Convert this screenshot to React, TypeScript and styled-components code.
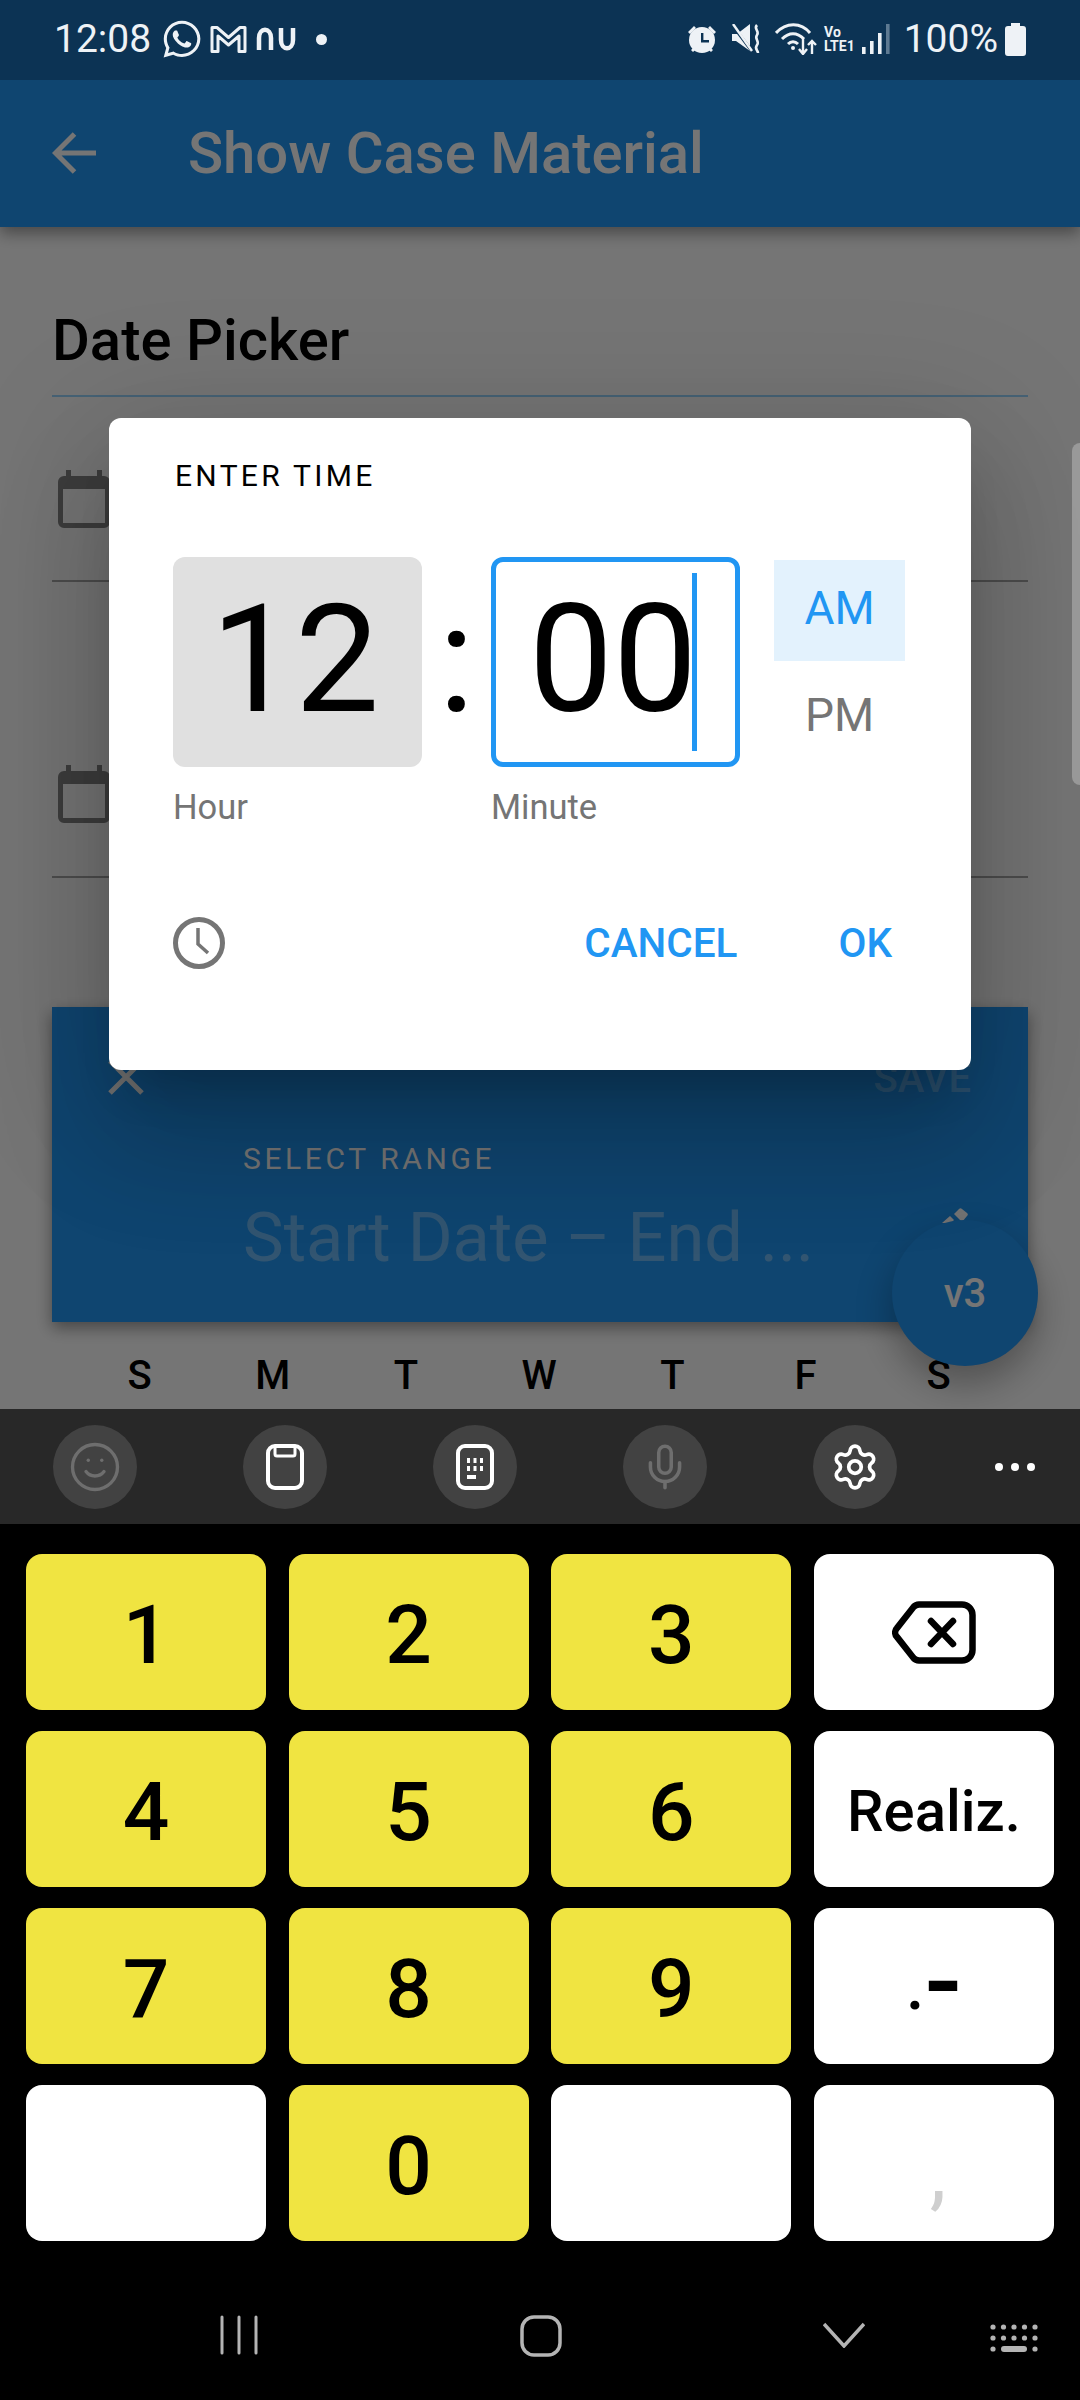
import React from 'react';
import styled, { createGlobalStyle } from 'styled-components';
import { Mic, Settings, Smile } from 'lucide-react';
import { FaWhatsapp } from 'react-icons/fa';

const GlobalStyle = createGlobalStyle`
  html, body {
    margin: 0;
    padding: 0;
    background: #000;
  }
  * {
    box-sizing: border-box;
  }
`;

const Root = styled.div`
  width: 1080px;
  height: 2400px;
  display: flex;
  flex-direction: column;
  overflow: hidden;
  font-family: Roboto, "Liberation Sans", sans-serif;
`;

const StatusBar = styled.div`
  height: 80px;
  flex-shrink: 0;
  display: flex;
  align-items: center;
  justify-content: space-between;
  padding: 0 54px 2px 54px;
  background: #0c3354;
  color: #eef2f6;
`;

const StatusGroup = styled.div`
  display: flex;
  align-items: center;
`;

const StatusText = styled.span<{ $ml?: number }>`
  font-size: 39px;
  line-height: 48px;
  margin-left: ${p => p.$ml || 0}px;
`;

const StatusIcon = styled.svg<{ $ml?: number }>`
  display: block;
  margin-left: ${p => p.$ml || 0}px;
  flex-shrink: 0;
`;

const NetStack = styled.div`
  display: flex;
  flex-direction: column;
  margin-left: 7px;
  font-size: 14px;
  font-weight: 700;
  line-height: 14px;
`;

const Screen = styled.div`
  position: relative;
  height: 1329px;
  flex-shrink: 0;
  overflow: hidden;
  background: #fff;
`;

const AppBar = styled.div`
  height: 147px;
  display: flex;
  align-items: center;
  padding: 0 0 2px 52px;
  background: #2196f3;
  color: #fff;
  box-shadow: 0 6px 15px rgba(0, 0, 0, 0.4);
`;

const AppTitle = styled.div`
  margin-left: 92px;
  font-size: 58px;
  font-weight: 500;
`;

const Content = styled.div`
  padding: 0 52px;
`;

const SectionTitle = styled.div`
  margin-top: 81px;
  height: 64px;
  font-size: 58px;
  line-height: 64px;
  font-weight: 500;
  color: #000;
`;

const SectionRule = styled.div`
  height: 2px;
  margin-top: 23px;
  background: #9ad5ff;
`;

const DateRow = styled.div<{ $height: number; $iconTop: number }>`
  height: ${p => p.$height}px;
  padding: ${p => p.$iconTop}px 0 0 6px;
  border-bottom: 2px solid #a8a8a8;
`;

const RangeHeader = styled.div`
  height: 315px;
  margin-top: 129px;
  background: #2196f3;
  color: #fff;
  box-shadow: 0 6px 15px rgba(0, 0, 0, 0.4);
  display: flex;
  flex-direction: column;
  padding: 137px 0 0 191px;
`;

const RangeLabel = styled.div`
  font-size: 30px;
  line-height: 30px;
  letter-spacing: 3.6px;
`;

const RangeValue = styled.div`
  margin-top: 19px;
  font-size: 68.5px;
  line-height: 90px;
  color: rgba(255, 255, 255, 0.35);
  white-space: nowrap;
`;

const WeekRow = styled.div`
  display: grid;
  grid-template-columns: repeat(7, 133.2px);
  margin: 30px 0 0 21px;
`;

const WeekDay = styled.div`
  text-align: center;
  font-size: 40px;
  line-height: 47px;
  font-weight: 500;
  color: #000;
`;

const RangeTools = styled.div`
  position: absolute;
  left: 53px;
  top: 927px;
  width: 974px;
  height: 100px;
  color: #fff;
`;

const RangeSave = styled.div`
  position: absolute;
  right: 56px;
  top: 48px;
  font-size: 40px;
  font-weight: 500;
  line-height: 47px;
  color: rgba(255, 255, 255, 0.3);
`;

const RangeClose = styled.svg`
  position: absolute;
  left: 55px;
  top: 52px;
`;

const ScrollThumb = styled.div`
  position: absolute;
  right: -8px;
  top: 363px;
  width: 16px;
  height: 342px;
  border-radius: 8px;
  background: #9b9b9b;
`;

const Fab = styled.div`
  position: absolute;
  left: 892px;
  top: 1140px;
  width: 146px;
  height: 146px;
  border-radius: 50%;
  display: flex;
  align-items: center;
  justify-content: center;
  background: #2196f3;
  color: #fff;
  font-size: 40px;
  font-weight: 500;
  box-shadow: 0 18px 36px rgba(0, 0, 0, 0.3);
`;

const FabPeek = styled.svg`
  position: absolute;
  left: 942px;
  top: 1128px;
`;

const Scrim = styled.div`
  position: absolute;
  inset: 0;
  background: rgba(0, 0, 0, 0.54);
`;

const Dialog = styled.div`
  position: absolute;
  left: 109px;
  top: 338px;
  width: 862px;
  height: 652px;
  display: flex;
  flex-direction: column;
  padding: 0 64px;
  border-radius: 12px;
  background: #fff;
  box-shadow: 0 72px 114px 9px rgba(0, 0, 0, 0.14), 0 27px 138px 24px rgba(0, 0, 0, 0.12),
    0 33px 45px -21px rgba(0, 0, 0, 0.2);
`;

const DialogTitle = styled.div`
  margin: 40px 0 0 2px;
  height: 36px;
  font-size: 30px;
  line-height: 36px;
  letter-spacing: 3.3px;
  color: #000;
`;

const TimeRow = styled.div`
  display: flex;
  margin-top: 63px;
`;

const TimeColumn = styled.div`
  width: 249px;
  display: flex;
  flex-direction: column;
`;

const TimeField = styled.div<{ $focused?: boolean }>`
  position: relative;
  height: 210px;
  display: flex;
  align-items: center;
  justify-content: center;
  padding: 0 5px 5px 0;
  border-radius: 12px;
  border: ${p => (p.$focused ? '5px solid #2196f3' : 'none')};
  background: ${p => (p.$focused ? '#fff' : '#e0e0e0')};
  font-size: 150px;
  line-height: 176px;
  color: #000;
`;

const Caret = styled.div`
  position: absolute;
  left: 196px;
  top: 11px;
  width: 5px;
  height: 178px;
  background: #2196f3;
`;

const FieldLabel = styled.div`
  margin: 19px 0 0 0;
  font-size: 34.5px;
  line-height: 42px;
  color: #757575;
`;

const Colon = styled.div`
  width: 69px;
  height: 210px;
  display: flex;
  align-items: center;
  justify-content: center;
  padding-bottom: 5px;
  font-size: 150px;
  line-height: 176px;
  color: #000;
`;

const PeriodColumn = styled.div`
  width: 131px;
  margin: 3px 0 0 34px;
  display: flex;
  flex-direction: column;
`;

const PeriodOption = styled.div<{ $active?: boolean }>`
  height: 101px;
  display: flex;
  align-items: center;
  justify-content: center;
  margin-bottom: 6px;
  padding-bottom: 5px;
  font-size: 46px;
  color: ${p => (p.$active ? '#2196f3' : '#757575')};
  background: ${p => (p.$active ? '#e3f2fd' : 'transparent')};
`;

const ActionRow = styled.div`
  display: flex;
  align-items: center;
  margin-top: 87px;
  height: 56px;
`;

const ActionSpacer = styled.div`
  flex: 1;
`;

const ActionButton = styled.div<{ $ml: number }>`
  margin: 0 15px 0 ${p => p.$ml}px;
  font-size: 40.5px;
  font-weight: 500;
  color: #2196f3;
`;

const Toolbar = styled.div`
  height: 115px;
  flex-shrink: 0;
  position: relative;
  display: flex;
  align-items: center;
  gap: 106px;
  padding-left: 53px;
  background: #282828;
`;

const ToolButton = styled.div<{ $dim?: boolean }>`
  width: 84px;
  height: 84px;
  display: flex;
  align-items: center;
  justify-content: center;
  border-radius: 50%;
  background: #424242;
  color: ${p => (p.$dim ? '#6e6e6e' : '#fff')};
`;

const MoreDots = styled.div`
  display: flex;
  gap: 8px;
  margin-left: -8px;
`;

const MoreDot = styled.span`
  width: 8px;
  height: 8px;
  border-radius: 50%;
  background: #fff;
`;

const Keyboard = styled.div`
  height: 876px;
  flex-shrink: 0;
  display: flex;
  flex-direction: column;
  background: #000;
  padding: 30px 26px 0;
`;

const KeyGrid = styled.div`
  display: grid;
  grid-template-columns: repeat(4, 240px);
  grid-auto-rows: 156px;
  column-gap: 22.67px;
  row-gap: 21px;
`;

const Key = styled.div<{ $digit?: boolean }>`
  display: flex;
  align-items: center;
  justify-content: center;
  border-radius: 16px;
  background: ${p => (p.$digit ? '#f0e441' : '#fff')};
  color: #000;
  font-size: 82px;
  font-weight: 500;
  padding-top: ${p => (p.$digit ? 6 : 0)}px;
`;

const KeyWord = styled.span`
  font-size: 58px;
  margin-top: 4px;
`;

const KeyDash = styled.span`
  display: flex;
  align-items: baseline;
  margin-top: 6px;
  font-size: 110px;
  line-height: 110px;
`;

const KeyDot = styled.span`
  font-size: 66px;
  transform: translateY(-10px);
`;

const KeyComma = styled.span`
  margin: 18px 0 0 8px;
  font-size: 84px;
  line-height: 84px;
  font-weight: 400;
  color: #cfcfcf;
`;

const NavBar = styled.div`
  position: relative;
  height: 40px;
  margin-top: 74px;
  display: flex;
  align-items: center;
`;

const NavIcon = styled.svg<{ $left: number; $top?: number }>`
  position: absolute;
  left: ${p => p.$left}px;
  top: ${p => p.$top || 0}px;
`;

const CalendarIcon = () => (
  <svg width="52" height="58" viewBox="0 0 52 58" fill="#858585">
    <path d="M8 0h5v8H8zM39 0h5v8h-5z" />
    <path
      fillRule="evenodd"
      d="M6 6h40a6 6 0 0 1 6 6v40a6 6 0 0 1-6 6H6a6 6 0 0 1-6-6V12a6 6 0 0 1 6-6zM5 19v34h42V19z"
    />
  </svg>
);

const Digit = ({ value }: { value: string }) => <Key $digit>{value}</Key>;

const App = () => (
  <Root>
    <GlobalStyle />
    <StatusBar>
      <StatusGroup>
        <StatusText>12:08</StatusText>
        <FaWhatsapp size={42} style={{ marginLeft: 10 }} />
        <StatusIcon $ml={7} width="37" height="30" viewBox="0 0 37 30" fill="none" stroke="currentColor" strokeWidth="3" strokeLinejoin="round">
          <path d="M2 3.5h5l11.5 10L30 3.5h5v24h-6V12L18.5 21 8 12v15.5H2z" />
        </StatusIcon>
        <StatusIcon $ml={9} width="40" height="24" viewBox="0 0 40 24" fill="none" stroke="currentColor" strokeWidth="4.5">
          <path d="M3 23V11c0-11 12-11 12 0v12M25 1v12c0 11 12 11 12 0V1" />
        </StatusIcon>
        <StatusIcon $ml={20} width="11" height="11" viewBox="0 0 11 11" fill="currentColor">
          <circle cx="5.5" cy="5.5" r="5.5" />
        </StatusIcon>
      </StatusGroup>
      <StatusGroup>
        <StatusIcon width="30" height="30" viewBox="0 0 30 30" fill="currentColor">
          <circle cx="15" cy="16" r="13" />
          <path d="M1 8l6-6 2 2-6 6zM29 8l-6-6-2 2 6 6zM4 26l3-3 2 2-3 3zM26 26l-3-3-2 2 3 3z" />
          <path d="M14 9h2.4v7H22v2.4h-8z" fill="#0c3354" />
        </StatusIcon>
        <StatusIcon $ml={15} width="30" height="30" viewBox="0 0 30 30" fill="currentColor">
          <path d="M0 10h5L18 0v27L4 17H0z" />
          <path d="M1 2l18 24" stroke="#0c3354" strokeWidth="3" />
          <path d="M1 0l19 27" stroke="currentColor" strokeWidth="2.5" />
          <path d="M25 1c-4 4 3 6 0 10s3 6 0 10 1 5 1 8" fill="none" stroke="currentColor" strokeWidth="2.6" />
        </StatusIcon>
        <StatusIcon $ml={13} width="42" height="32" viewBox="0 0 42 32" fill="none" stroke="currentColor" strokeWidth="3">
          <path d="M1 10c10-11 25-11 34 0M7 16c7-7 15-7 22 0M13 21c3-3 7-3 10 0" />
          <circle cx="18" cy="25" r="2" fill="currentColor" stroke="none" />
          <path d="M28 15v15M24 26l4 5 4-5M37 31V18M33 22l4-4 4 4" strokeWidth="2.4" />
        </StatusIcon>
        <NetStack>
          <span>Vo</span>
          <span>LTE1</span>
        </NetStack>
        <StatusIcon $ml={7} width="28" height="30" viewBox="0 0 28 30" fill="currentColor">
          <rect x="0" y="23" width="3.6" height="7" />
          <rect x="8" y="17" width="3.6" height="13" />
          <rect x="16" y="9" width="3.6" height="21" />
          <rect x="24" y="0" width="3.6" height="30" fill="#5e7a92" />
        </StatusIcon>
        <StatusText $ml={14}>100%</StatusText>
        <StatusIcon $ml={7} width="21" height="33" viewBox="0 0 21 33" fill="currentColor">
          <path d="M6 0h9v3h3a3 3 0 0 1 3 3v24a3 3 0 0 1-3 3H3a3 3 0 0 1-3-3V6a3 3 0 0 1 3-3h3z" />
        </StatusIcon>
      </StatusGroup>
    </StatusBar>

    <Screen>
      <AppBar>
        <svg width="44" height="42" viewBox="0 0 44 42" fill="none" stroke="currentColor" strokeWidth="5">
          <path d="M44 21H5M22.5 2L3.5 21l19 19" />
        </svg>
        <AppTitle>Show Case Material</AppTitle>
      </AppBar>
      <Content>
        <SectionTitle>Date Picker</SectionTitle>
        <SectionRule />
        <DateRow $height={185} $iconTop={73}>
          <CalendarIcon />
        </DateRow>
        <DateRow $height={296} $iconTop={183}>
          <CalendarIcon />
        </DateRow>
        <RangeHeader>
          <RangeLabel>SELECT RANGE</RangeLabel>
          <RangeValue>Start Date – End ...</RangeValue>
        </RangeHeader>
        <WeekRow>
          {['S', 'M', 'T', 'W', 'T', 'F', 'S'].map((d, i) => (
            <WeekDay key={i}>{d}</WeekDay>
          ))}
        </WeekRow>
      </Content>
      <RangeTools>
        <RangeClose width="36" height="36" viewBox="0 0 36 36" fill="none" stroke="#fff" strokeWidth="5">
          <path d="M2 2l32 32M34 2L2 34" />
        </RangeClose>
        <RangeSave>SAVE</RangeSave>
      </RangeTools>
      <FabPeek width="26" height="15" viewBox="0 0 26 15" fill="#fff">
        <path d="M12 6l5-5a2 2 0 0 1 3 0l5 4a2 2 0 0 1 0 3l-5 6zM0 15l8-7 4 4-3 3z" />
      </FabPeek>
      <Fab>v3</Fab>
      <Scrim />
      <ScrollThumb />
      <Dialog>
        <DialogTitle>ENTER TIME</DialogTitle>
        <TimeRow>
          <TimeColumn>
            <TimeField>12</TimeField>
            <FieldLabel>Hour</FieldLabel>
          </TimeColumn>
          <Colon>:</Colon>
          <TimeColumn>
            <TimeField $focused>
              00
              <Caret />
            </TimeField>
            <FieldLabel>Minute</FieldLabel>
          </TimeColumn>
          <PeriodColumn>
            <PeriodOption $active>AM</PeriodOption>
            <PeriodOption>PM</PeriodOption>
          </PeriodColumn>
        </TimeRow>
        <ActionRow>
          <svg width="52" height="52" viewBox="0 0 52 52" fill="none" stroke="#757575" strokeWidth="5">
            <circle cx="26" cy="26" r="23.5" />
            <path d="M25 11v16l10 9" strokeWidth="3.5" />
          </svg>
          <ActionSpacer />
          <ActionButton $ml={0}>CANCEL</ActionButton>
          <ActionButton $ml={86}>OK</ActionButton>
        </ActionRow>
      </Dialog>
    </Screen>

    <Toolbar>
      <ToolButton $dim>
        <Smile size={54} strokeWidth={1.5} />
      </ToolButton>
      <ToolButton>
        <svg width="38" height="46" viewBox="0 0 38 46" fill="none" stroke="currentColor" strokeWidth="4">
          <rect x="2" y="2" width="34" height="42" rx="7" />
          <path d="M9 2v8a2 2 0 0 0 2 2h16a2 2 0 0 0 2-2V2" strokeWidth="3" />
        </svg>
      </ToolButton>
      <ToolButton>
        <svg width="38" height="46" viewBox="0 0 38 46" fill="currentColor">
          <rect x="2" y="2" width="34" height="42" rx="7" fill="none" stroke="currentColor" strokeWidth="4" />
          <path d="M11 14h3v5h-3zM17.500 14h3v5h-3zM24 14h3v5h-3zM11 22h3v5h-3zM17.500 22h3v5h-3zM24 22h3v5h-3zM11 31h9v4h-9z" />
        </svg>
      </ToolButton>
      <ToolButton $dim>
        <Mic size={50} strokeWidth={1.7} />
      </ToolButton>
      <ToolButton>
        <Settings size={50} strokeWidth={1.8} />
      </ToolButton>
      <MoreDots>
        <MoreDot />
        <MoreDot />
        <MoreDot />
      </MoreDots>
    </Toolbar>

    <Keyboard>
      <KeyGrid>
        <Digit value="1" />
        <Digit value="2" />
        <Digit value="3" />
        <Key>
          <svg width="84" height="63" viewBox="0 0 84 63" fill="none" stroke="#000" strokeWidth="6.500" strokeLinecap="round">
            <path d="M27 3.500h43a10.500 10.500 0 0 1 10.500 10.500v35a10.500 10.500 0 0 1-10.500 10.500H27a8 8 0 0 1-5.500-2.500L5 36a6.500 6.500 0 0 1 0-9L21.500 6a8 8 0 0 1 5.500-2.500z" />
            <path d="M39 20l22 23M61 20L39 43" />
          </svg>
        </Key>
        <Digit value="4" />
        <Digit value="5" />
        <Digit value="6" />
        <Key>
          <KeyWord>Realiz.</KeyWord>
        </Key>
        <Digit value="7" />
        <Digit value="8" />
        <Digit value="9" />
        <Key>
          <KeyDash>
            <KeyDot>.</KeyDot>-
          </KeyDash>
        </Key>
        <Key />
        <Digit value="0" />
        <Key />
        <Key>
          <KeyComma>,</KeyComma>
        </Key>
      </KeyGrid>
      <NavBar>
        <NavIcon $left={194} width="40" height="40" viewBox="0 0 40 40" fill="none" stroke="#b4b4b4" strokeWidth="3" strokeLinecap="round">
          <path d="M2 2v36M19 2v36M36 2v36" />
        </NavIcon>
        <NavIcon $left={494} width="42" height="42" viewBox="0 0 42 42" fill="none" stroke="#b4b4b4" strokeWidth="3.500">
          <rect x="2" y="2" width="38" height="38" rx="12" />
        </NavIcon>
        <NavIcon $left={797} $top={7} width="42" height="26" viewBox="0 0 42 26" fill="none" stroke="#b4b4b4" strokeWidth="3.500">
          <path d="M1 2l20 22L41 2" />
        </NavIcon>
        <NavIcon $left={964} $top={9} width="48" height="28" viewBox="0 0 48 28" fill="#b4b4b4">
          {[0, 1, 2, 3, 4].map(i => (
            <React.Fragment key={i}>
              <circle cx={3 + i * 10.5} cy="3" r="2.6" />
              <circle cx={3 + i * 10.5} cy="14" r="2.6" />
            </React.Fragment>
          ))}
          <circle cx="3" cy="25" r="2.6" />
          <circle cx="45" cy="25" r="2.6" />
          <rect x="11" y="22" width="26" height="6" rx="3" />
        </NavIcon>
      </NavBar>
    </Keyboard>
  </Root>
);

export default App;
